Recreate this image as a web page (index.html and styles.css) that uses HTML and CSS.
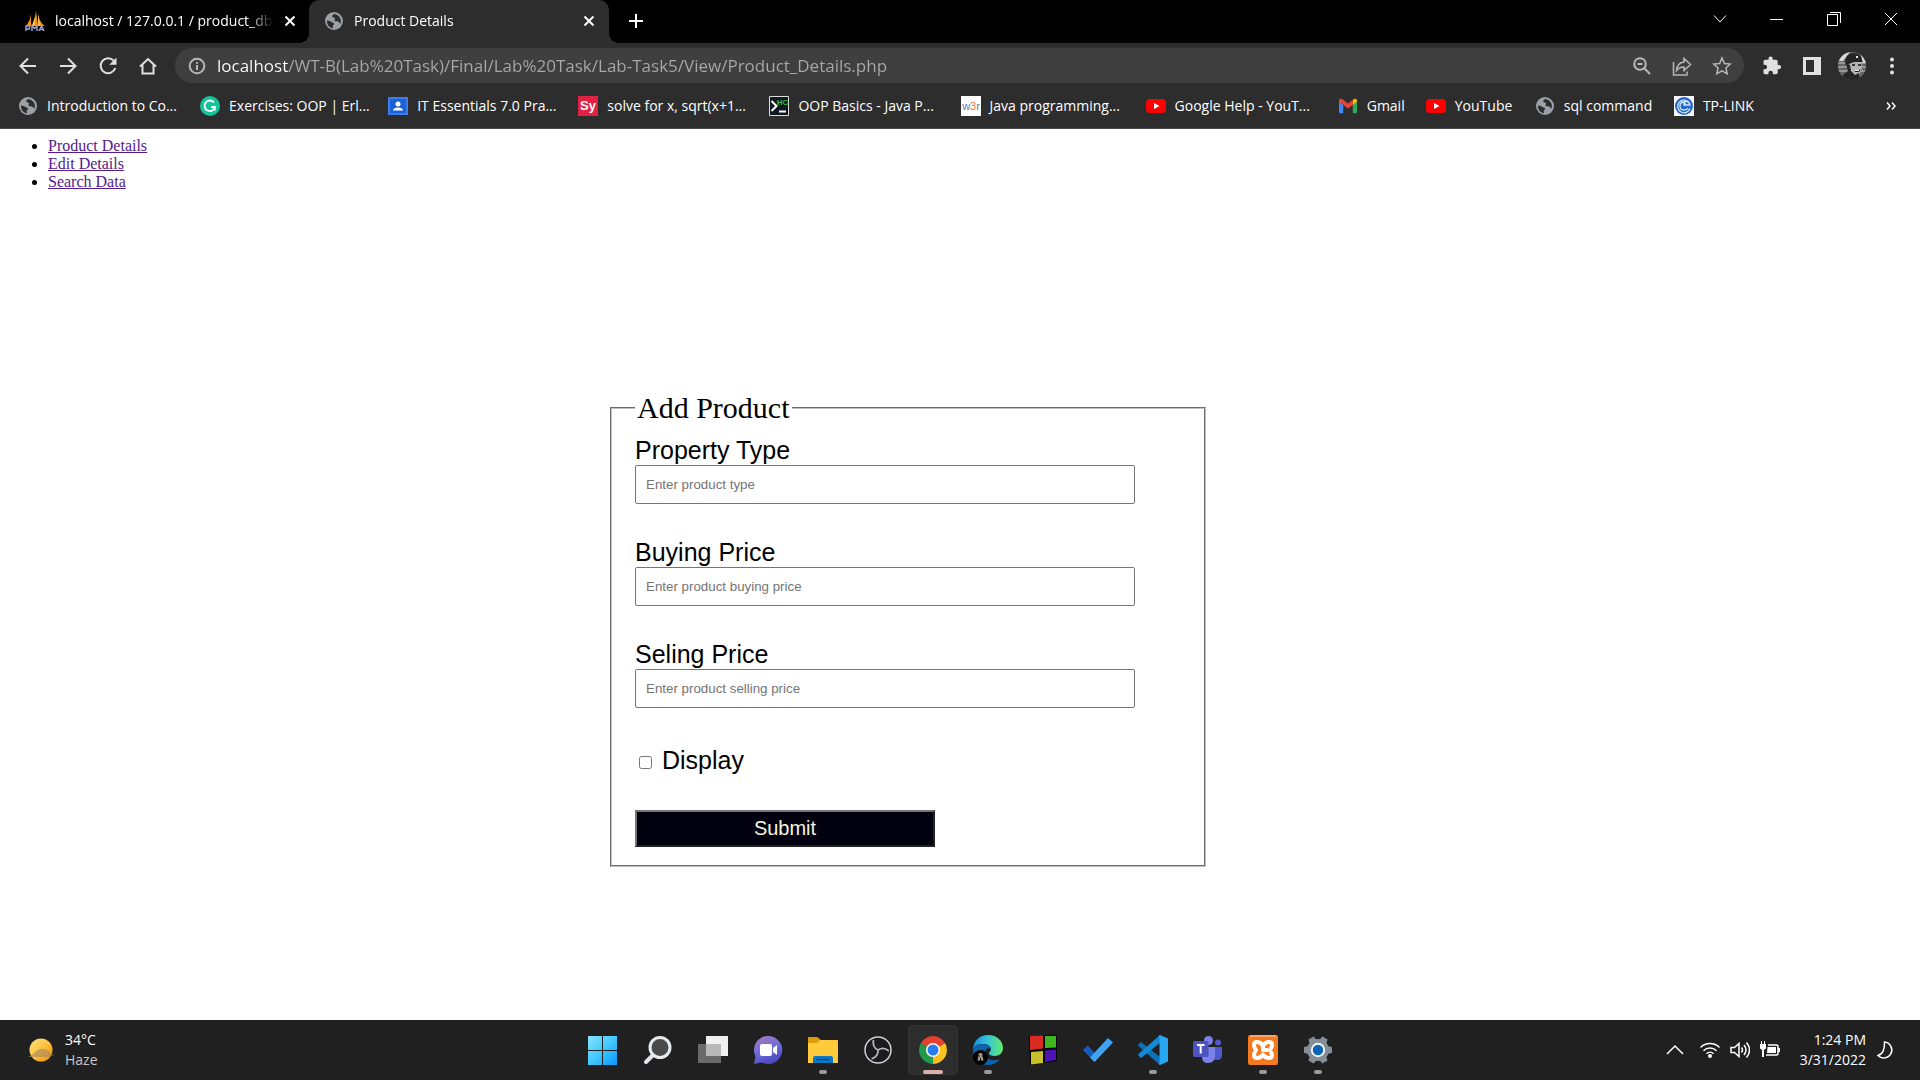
FILE: index.html
```html
<!DOCTYPE html>
<html lang="en">
<head>
<meta charset="utf-8">
<title>Product Details</title>
<link rel="stylesheet" href="styles.css">
</head>
<body>
<svg class="defs" aria-hidden="true">
  <defs>
    <symbol id="globe" viewBox="0 0 20 20"><circle cx="10" cy="10" r="9" fill="#9aa0a6"/><path d="M3 9.500c2 .2 3.500.8 4.500 1.600 1 .7 2.300.5 2.500 1.600.2 1-1.300 1.500-1.300 2.600 0 .8.300 1.300.3 2C5.600 17 2.800 13.800 3 9.500zM10 3c-1.500 1-2 1.800-1.700 2.700.5 1 2.200.6 2.600 1.600.4 1.100-.8 1.600-.2 2.500.8 1 2.500.2 3.500.8.9.6 1.300 1.700 2.300 2 1.300-3.800-.6-8.800-6.500-9.600z" fill="#2d2d2d"/></symbol>
    <symbol id="close" viewBox="0 0 12 12"><path d="M1.500 1.500l9 9m0-9l-9 9" stroke="#fff" stroke-width="2"/></symbol>
    <symbol id="youtube" viewBox="0 0 20 20"><rect x="0" y="3" width="20" height="14" rx="4" fill="#f00"/><path d="M8 7l5.500 3L8 13z" fill="#fff"/></symbol>
  </defs>
</svg>

<header class="browser">
  <div class="tabstrip">
    <div class="tab">
      <svg class="icon20" viewBox="0 0 20 20"><path d="M6 3Q5.500 9 1 15h5zM11 0Q11 8 6.500 15H13zM13 3q1 7 6.500 12H13z" fill="#f29111"/><path d="M11 0q-1 7-4 15h2.500zM13 3v12h2z" fill="#ffc46b"/><path d="M1 20v-5h3.500v3H1M7 20v-5l2.500 2.500L12 15v5M14 20l2.500-5 2.500 5M15 18.500h4" fill="none" stroke="#9a9dc8" stroke-width="1.500"/></svg>
      <span class="tab-title">localhost / 127.0.0.1 / product_db</span>
      <button class="plain" aria-label="Close tab"><svg class="icon12"><use href="#close"/></svg></button>
    </div>
    <div class="tab active">
      <svg class="icon20"><use href="#globe"/></svg>
      <span class="tab-title">Product Details</span>
      <button class="plain" aria-label="Close tab"><svg class="icon12"><use href="#close"/></svg></button>
    </div>
    <button class="plain newtab" aria-label="New tab"><svg class="icon16" viewBox="0 0 16 16"><path d="M8 1v14M1 8h14" stroke="#fff" stroke-width="2"/></svg></button>
    <div class="window-controls">
      <button class="plain" aria-label="Search tabs"><svg class="icon14" viewBox="0 0 14 14"><path d="M1 3.500l6 6.500 6-6.500"/></svg></button>
      <button class="plain" aria-label="Minimize"><svg class="icon14" viewBox="0 0 14 14"><path d="M0 7.500h13"/></svg></button>
      <button class="plain" aria-label="Restore"><svg class="icon14" viewBox="0 0 14 14"><path d="M.5 2.500h10v11H.5zM3 .5h10.500V11"/></svg></button>
      <button class="plain" aria-label="Close"><svg class="icon14" viewBox="0 0 14 14"><path d="M1 1l12 12M13 1L1 13"/></svg></button>
    </div>
  </div>

  <div class="toolbar">
    <div class="nav">
      <button class="plain" aria-label="Back"><svg class="icon20" viewBox="0 0 20 20"><path d="M18 10H3m7-7.500L2.500 10l7.500 7.500"/></svg></button>
      <button class="plain" aria-label="Forward"><svg class="icon20" viewBox="0 0 20 20"><path d="M2 10h15m-7-7.500l7.500 7.500-7.500 7.500"/></svg></button>
      <button class="plain" aria-label="Reload"><svg class="icon20" viewBox="0 0 20 20"><path d="M15.700 4.600A7.500 7.500 0 1 0 17.300 12"/><path d="M18.500 1.500v7.200h-7.200z" fill="#e0e0e0" stroke="none"/></svg></button>
      <button class="plain" aria-label="Home"><svg class="icon20" viewBox="0 0 20 20"><path d="M2 10.500L10 3l8 7.500M4.500 9v8.500h11V9"/></svg></button>
    </div>
    <div class="omnibox">
      <svg class="icon18" viewBox="0 0 18 18"><circle cx="9" cy="9" r="7.300"/><path d="M9 8v5M9 5v1.800"/></svg>
      <input class="address" type="text" aria-label="Address" value="localhost/WT-B(Lab%20Task)/Final/Lab%20Task/Lab-Task5/View/Product_Details.php">
      <button class="plain" aria-label="Zoom"><svg class="icon20" viewBox="0 0 20 20"><circle cx="8" cy="8" r="5.800"/><path d="M12.500 12.500l5.500 5.500M5.500 8h5"/></svg></button>
      <button class="plain" aria-label="Share"><svg class="icon20 thin" viewBox="0 0 20 20"><path d="M1.500 6v13H15v-3.500M12 2.500V6C7 6.500 5 9.500 4.500 14.500 6.500 12 8.500 11 12 11v3.500l6.500-6z"/></svg></button>
      <button class="plain" aria-label="Bookmark"><svg class="icon20 thin" viewBox="0 0 20 20"><path d="M10 2l2.400 5.500 6 .5-4.500 4 1.300 5.800L10 14.800l-5.200 3L6.100 12 1.600 8l6-.5z"/></svg></button>
    </div>
    <div class="extensions">
      <button class="plain" aria-label="Extensions"><svg class="icon20" viewBox="0 0 20 20"><path d="M17 9h-1.300V5.500c0-.9-.7-1.700-1.700-1.700h-3.300V2.500a2 2 0 0 0-4.200 0v1.300H3.200c-.9 0-1.700.8-1.700 1.700v3.200h1.300a2.200 2.200 0 0 1 0 4.500H1.500v3.300c0 .9.800 1.700 1.700 1.700h3.200v-1.300a2.200 2.200 0 0 1 4.500 0v1.300H14c1 0 1.700-.8 1.700-1.700v-3.300H17A2.100 2.100 0 0 0 17 9z" fill="#e0e0e0" stroke="none"/></svg></button>
      <button class="plain" aria-label="Side panel"><svg class="icon20" viewBox="0 0 20 20"><path d="M1 1h18v18H1zM4 4v12h8V4z" fill="#e0e0e0" fill-rule="evenodd" stroke="none"/></svg></button>
      <button class="plain" aria-label="Profile"><svg class="icon28" viewBox="0 0 28 28"><clipPath id="face"><circle cx="14" cy="14" r="14"/></clipPath><g clip-path="url(#face)" stroke="none"><path d="M0 0h28v28H0z" fill="#666"/><path d="M0 11h28M0 15h28M0 19h28" stroke="#a5a5a5" stroke-width="1.500"/><path d="M0 0h12L5 9H0zM22 0h6v11h-4z" fill="#d8d8d8"/><path d="M12 9l11 0 1 7-3 7-5 1-5-5z" fill="#b5b5b5"/><path d="M7 11Q7 2 15 1q9 0 9 7l1 2-9 0-8 3zM8 12l4 1 1 6 4 4 4-2v3l4 4H3l2-5 5-4z" fill="#252525"/><path d="M14 13h3M20 13h3M17 19q3 1 5-1" fill="none" stroke="#111" stroke-width="1.500"/><path d="M17 18h4v1h-4zM18 4h2v2h-2z" fill="#eee"/></g></svg></button>
      <button class="plain" aria-label="Menu"><svg class="icon20" viewBox="0 0 20 20"><g fill="#e0e0e0" stroke="none"><circle cx="10" cy="3.500" r="2"/><circle cx="10" cy="10" r="2"/><circle cx="10" cy="16.500" r="2"/></g></svg></button>
    </div>
  </div>

  <nav class="bookmarks" aria-label="Bookmarks">
    <a href="#"><svg class="icon20"><use href="#globe"/></svg>Introduction to Co...</a>
    <a href="#"><svg class="icon20" viewBox="0 0 20 20"><circle cx="10" cy="10" r="10" fill="#15c39a"/><path d="M14 6.500A5.300 5.300 0 1 0 15 11h-4M14.800 11v3.500" fill="none" stroke="#fff" stroke-width="1.800"/></svg>Exercises: OOP | Erl...</a>
    <a href="#"><svg class="icon20" viewBox="0 0 20 20"><path d="M0 1h20v18H0z" fill="#3b7ded"/><path d="M2 3h16v14H2z" fill="#1a62d6"/><circle cx="10" cy="8" r="2.500" fill="#fff"/><path d="M5 14.500c0-4 10-4 10 0z" fill="#fff"/></svg>IT Essentials 7.0 Pra...</a>
    <a href="#"><svg class="icon20" viewBox="0 0 20 20"><path d="M0 0h20v20H0z" fill="#e12244"/><text x="10" y="14" class="logo-text" fill="#fff" font-size="13">Sy</text></svg>solve for x, sqrt(x+1...</a>
    <a href="#"><svg class="icon20" viewBox="0 0 20 20"><path d="M.5.500h19v19H.5z" fill="#101820" stroke="#ddd"/><path d="M2.500 5l5 5-5 5M10 15.500h7" fill="none" stroke="#fff" stroke-width="2"/><text x="13.500" y="8.500" class="logo-text" fill="#2ebd3c" font-size="8">HC</text></svg>OOP Basics - Java P...</a>
    <a href="#"><svg class="icon20" viewBox="0 0 20 20"><path d="M0 0h20v20H0z" fill="#fff"/><text x="10" y="14" class="logo-text light" fill="#4f7cc0" font-size="11">w<tspan fill="#f07840">3</tspan>r</text></svg>Java programming...</a>
    <a href="#"><svg class="icon20"><use href="#youtube"/></svg>Google Help - YouT...</a>
    <a href="#"><svg class="icon20" viewBox="0 0 20 20"><path d="M1 5v11q0 1.200 1.200 1.200h3V9z" fill="#4285f4"/><path d="M19 5v11q0 1.200-1.200 1.200h-3V9z" fill="#34a853"/><path d="M1 5.500v-.8c0-2 2-2.400 3.200-1.600L10 7.500l4.800-3.600V9L10 12.600z" fill="#ea4335"/><path d="M14.800 9V4l1-.8C17.200 2.200 19 3 19 4.700v1.100z" fill="#fbbc04"/></svg>Gmail</a>
    <a href="#"><svg class="icon20"><use href="#youtube"/></svg>YouTube</a>
    <a href="#"><svg class="icon20"><use href="#globe"/></svg>sql command</a>
    <a href="#"><svg class="icon20" viewBox="0 0 20 20"><path d="M0 0h20v20H0z" fill="#f4f6fa"/><circle cx="10" cy="10" r="9" fill="#2467c4"/><path d="M14.500 6A6.300 6.300 0 1 0 16 12.500M10 10V6q-4 0-4 4t4 4q3 0 4-2M11 9h5q-1-4-5-4z" fill="none" stroke="#cfe6ff" stroke-width="1.300"/></svg>TP-LINK</a>
    <button class="plain more" aria-label="More bookmarks"><svg class="icon12" viewBox="0 0 12 12"><path d="M2 2.500L5 6 2 9.500M7 2.500L10 6 7 9.500" fill="none" stroke="#fff" stroke-width="1.500"/></svg></button>
  </nav>
</header>

<main class="page">
  <ul class="menu">
    <li><a href="#">Product Details</a></li>
    <li><a href="#">Edit Details</a></li>
    <li><a href="#">Search Data</a></li>
  </ul>
  <form class="product-form">
    <fieldset>
      <legend>Add Product</legend>
      <div class="field">
        <label for="type">Property Type</label>
        <input id="type" type="text" placeholder="Enter product type">
      </div>
      <div class="field">
        <label for="buying">Buying Price</label>
        <input id="buying" type="text" placeholder="Enter product buying price">
      </div>
      <div class="field">
        <label for="selling">Seling Price</label>
        <input id="selling" type="text" placeholder="Enter product selling price">
      </div>
      <div class="check">
        <input id="display" type="checkbox">
        <label for="display">Display</label>
      </div>
      <button class="submit" type="button">Submit</button>
    </fieldset>
  </form>
</main>

<footer class="taskbar">
  <div class="weather">
    <svg class="icon28" viewBox="0 0 28 28"><defs><linearGradient id="sun" x1="0" y1="0" x2="1" y2="1"><stop offset="0" stop-color="#ffe880"/><stop offset=".5" stop-color="#fdc040"/><stop offset="1" stop-color="#f58a00"/></linearGradient></defs><circle cx="14" cy="14" r="11.500" fill="url(#sun)"/><path d="M1 21l5-3 3-3 4-2 5 0 5 3 1 2 4 1-5 1-1 1z" fill="#a08a66" opacity=".6"/></svg>
    <div class="weather-text"><span>34°C</span><span class="dim">Haze</span></div>
  </div>

  <div class="apps">
    <button class="app" aria-label="Start"><svg viewBox="0 0 30 30"><defs><linearGradient id="win" gradientUnits="userSpaceOnUse" x1="0" y1="0" x2="30" y2="30"><stop offset="0" stop-color="#8be4ff"/><stop offset=".5" stop-color="#42c8fc"/><stop offset="1" stop-color="#0795ff"/></linearGradient></defs><path d="M0 1h14v14H0zM15 1h14v14H15zM0 16h14v14H0zM15 16h14v14H15z" fill="url(#win)"/></svg></button>
    <button class="app" aria-label="Search"><svg viewBox="0 0 30 30"><path d="M10 20l-7 7" stroke="#e2e5e8" stroke-width="4" stroke-linecap="round"/><circle cx="17" cy="12.500" r="10" fill="#4a4a4a" stroke="#e8ebee" stroke-width="3"/></svg></button>
    <button class="app" aria-label="Task view"><svg viewBox="0 0 30 30"><path d="M8 1h22v20H8z" fill="#f0f0f0"/><path d="M0 9h23v19H0z" fill="#6a6a6a"/><path d="M8 9h15v12H8z" fill="#b8b8b8"/></svg></button>
    <button class="app" aria-label="Chat"><svg viewBox="0 0 30 30"><defs><linearGradient id="chat" x1="0" y1="0" x2=".4" y2="1"><stop offset="0" stop-color="#a77cba"/><stop offset=".6" stop-color="#6c6bdc"/><stop offset="1" stop-color="#4e4bc0"/></linearGradient></defs><path d="M15 1a14 14 0 1 1-6 26.500L1 29l1.500-7.500A14 14 0 0 1 15 1z" fill="url(#chat)"/><rect x="7" y="9" width="12" height="12" rx="2" fill="#fff"/><path d="M20 13l4-3v10l-4-3z" fill="#fff"/></svg></button>
    <button class="app open" aria-label="File Explorer"><svg viewBox="0 0 30 30"><path d="M0 3q0-1 1-1h8q1 0 2 1.500L13 5H29v6H0z" fill="#dc9c09"/><path d="M0 8h9l3-3h17q1 0 1 1v22H0z" fill="#ffcb3d"/><path d="M5 28v-5q0-2 2-2h16q2 0 2 2v5z" fill="#0b78c6"/><path d="M8.500 24.500h13" stroke="#054b83" stroke-width="1.500"/></svg></button>
    <button class="app" aria-label="OBS Studio"><svg viewBox="0 0 30 30"><circle cx="15" cy="15" r="13" fill="#1b1a1f" stroke="#d0d0d4" stroke-width="1.500"/><g fill="none" stroke="#b5b5b9" stroke-width="1.800"><path id="blade" d="M15 15q-6-3-4.500-10"/><use href="#blade" transform="rotate(120 15 15)"/><use href="#blade" transform="rotate(240 15 15)"/></g></svg></button>
    <button class="app open current" aria-label="Chrome"><svg viewBox="0 0 30 30"><path d="M15 15L2.900 8A14 14 0 0 1 27.100 8z" fill="#e8402f"/><path d="M15 15V29A14 14 0 0 1 2.900 8z" fill="#219b4b"/><path d="M15 15h0L27.100 8A14 14 0 0 1 15 29z" fill="#fcc31e"/><path d="M15 8H27L15 15zM9 18.500L3 8l12 7zM21 18.500L15 29V15z" fill="#e8402f"/><path d="M9 18.500L2.900 8 15 15z" fill="#219b4b"/><path d="M21 18.500L15 29V15z" fill="#fcc31e"/><circle cx="15" cy="15" r="7" fill="#fff"/><circle cx="15" cy="15" r="5.500" fill="#267cf0"/></svg></button>
    <button class="app open" aria-label="Edge"><svg viewBox="0 0 30 30"><defs><linearGradient id="edge"><stop offset="0" stop-color="#168de0"/><stop offset=".5" stop-color="#36c5d7"/><stop offset="1" stop-color="#65ea67"/></linearGradient></defs><path d="M0 14C1 5 7 0 15 0c9 0 15 6 15 13 0 5-4 8-8 8-4 0-6-1-6-3 0-1 2-2 2-4 0-3-4-5-8-5-5 0-8 2-10 5z" fill="url(#edge)"/><path d="M0 14c2-4 6-5 9-5 5 0 9 2 9 6-1-3-6-2-6 3 0 6 7 9 15 6-3 4-7 6-12 6C6 30 0 23 0 14z" fill="#0e63ac"/><circle cx="7.500" cy="22.500" r="7.500" fill="#000"/><path d="M7.500 18q2.500 0 2 3l1 4.500h-6l1-4.500q-.5-3 2-3z" fill="#aaa08f"/><path d="M6 21h1m1.500 0h1M7.500 23v3" stroke="#000"/></svg></button>
    <button class="app" aria-label="Photos viewer"><svg viewBox="0 0 30 30"><path d="M1 1l28-1v26L2 30z" fill="#050505"/><path d="M2 1l13-.500v13L2 15z" fill="#d82c20"/><path d="M17 1h11v11.500l-11 .5z" fill="#3fb720"/><path d="M3 17l12-1v12L3 29.500z" fill="#cabf2c"/><path d="M17 15.500l11-1V25l-11 2z" fill="#4e13b5"/></svg></button>
    <button class="app" aria-label="To Do"><svg viewBox="0 0 30 30"><path d="M0 15l4.500-4.500L16 22l-4.500 5z" fill="#195abd"/><path d="M7 22.500L25 3l5 4.500L11.500 27z" fill="#41a3ef"/></svg></button>
    <button class="app open" aria-label="Visual Studio Code"><svg viewBox="0 0 30 30"><path d="M0 10l3-3 19 15v8L1 11.500z" fill="#0b72b9"/><path d="M0 20l3 3L22 8V0L1 18.500z" fill="#1488d2"/><path d="M22 0l8 3.500v23L22 30l-1.500-1 1-1V2l-1-1z" fill="#27a6f4"/></svg></button>
    <button class="app" aria-label="Teams"><svg viewBox="0 0 30 30"><circle cx="15.500" cy="5.500" r="4.500" fill="#7b83eb"/><circle cx="25" cy="7.500" r="3" fill="#5059c9"/><path d="M19 12h10v8q0 5-5 5l-5-1z" fill="#5059c9"/><path d="M9 12h13v9q0 7-7 7-6 0-6-6z" fill="#7b83eb"/><rect y="6" width="15.500" height="16" rx="1.500" fill="#4b53bc"/><path d="M4 10h7.500M7.700 10v8.500" stroke="#fff" stroke-width="2"/></svg></button>
    <button class="app open" aria-label="XAMPP"><svg viewBox="0 0 30 30"><rect width="30" height="30" rx="2" fill="#f47a20"/><path d="M2 1h26" stroke="#fcb27b" stroke-width="1.500"/><path d="M15 11q-2-4-6-4-3 0-3 3 0 2 2 5-2 3-2 5 0 3 3 3 4 0 6-3.500 2 3.500 6 3.500 3 0 3-3 0-2-2-5 2-3 2-5 0-3-3-3-4 0-6 4zM15 11v4h5" fill="none" stroke="#fff" stroke-width="4" stroke-linejoin="round"/></svg></button>
    <button class="app open" aria-label="Settings"><svg viewBox="0 0 30 30"><g fill="#858e96"><circle cx="15" cy="15" r="11"/><path id="tooth" d="M11 6l1-5h6l1 5z" transform="rotate(30 15 15)"/><use href="#tooth" transform="rotate(60 15 15)"/><use href="#tooth" transform="rotate(120 15 15)"/><use href="#tooth" transform="rotate(180 15 15)"/><use href="#tooth" transform="rotate(240 15 15)"/><use href="#tooth" transform="rotate(300 15 15)"/></g><circle cx="15" cy="15" r="6.200" fill="#0a64b7" stroke="#f2f2f2" stroke-width="2"/></svg></button>
  </div>

  <div class="tray">
    <svg class="icon20" viewBox="0 0 20 20"><path d="M2 14l8-8 8 8"/></svg>
    <div class="status">
      <svg class="icon20" viewBox="0 0 20 20"><path d="M.5 7.500a13.500 13.500 0 0 1 19 0M3.500 10.700a9.200 9.200 0 0 1 13 0M6.500 13.700a5 5 0 0 1 7 0"/><circle cx="10" cy="16" r="2" fill="#fff" stroke="none"/></svg>
      <svg class="icon20" viewBox="0 0 20 20"><path d="M1 7.500h3.500L9 3.500v13l-4.500-4H1zM11.500 7.500q2 2.500 0 5M14 5q4 5 0 10M16.500 2.500q6 7.500 0 15"/></svg>
      <svg class="icon20" viewBox="0 0 20 20"><path d="M8 5h8.500q1.500 0 1.500 1.500v7q0 1.500-1.500 1.500H6" /><path d="M7.500 7H16v6H7zM18 8h2v4h-2zM0 4h6v4.500L4 10v7H2v-7L0 8.500zM1 1h1v3H1zM4 1h1v3H4z" fill="#fff" stroke="none"/></svg>
    </div>
    <div class="clock"><span>1:24 PM</span><span>3/31/2022</span></div>
    <svg class="icon20" viewBox="0 0 20 20"><path d="M8.500 2a8 8 0 1 1-6.500 13.500Q9 13.500 8.500 2z"/></svg>
  </div>
</footer>
</body>
</html>
```
FILE: styles.css
```css
* {
  box-sizing: border-box;
}

body {
  margin: 0;
  min-height: 100vh;
  display: flex;
  flex-direction: column;
  background: #fff;
  font: 16px "Liberation Serif", serif;
  color: #000;
}

svg {
  display: block;
  flex: none;
}

.defs {
  position: absolute;
  width: 0;
  height: 0;
}

.icon12 { width: 12px; height: 12px; }
.icon14 { width: 14px; height: 14px; }
.icon16 { width: 16px; height: 16px; }
.icon18 { width: 18px; height: 18px; }
.icon20 { width: 20px; height: 20px; }
.icon28 { width: 28px; height: 28px; }

.plain {
  border: 0;
  padding: 0;
  background: none;
  color: inherit;
}

/* Browser window */

.browser {
  background: #2d2d2d;
  border-bottom: 1px solid #4a4a4a;
  color: #fff;
  font: 14px "Open Sans", sans-serif;
}

.tabstrip {
  display: flex;
  height: 43px;
  background: #000;
}

.tab {
  display: flex;
  align-items: center;
  gap: 10px;
  width: 309px;
  padding: 0 13px 2px 25px;
}

.tab.active {
  position: relative;
  width: 300px;
  padding-left: 15px;
  padding-right: 14px;
  background: #2d2d2d;
  border-radius: 10px 10px 0 0;
}

.tab.active::before,
.tab.active::after {
  content: "";
  position: absolute;
  bottom: 0;
  width: 10px;
  height: 10px;
}

.tab.active::before {
  right: 100%;
  background: radial-gradient(circle at 0 0, #000 10px, #2d2d2d 10px);
}

.tab.active::after {
  left: 100%;
  background: radial-gradient(circle at 100% 0, #000 10px, #2d2d2d 10px);
}

.tab-title {
  flex: 1;
  overflow: hidden;
  white-space: nowrap;
  mask-image: linear-gradient(to right, #000 88%, transparent);
}

.newtab {
  padding: 0 19px 2px;
}

.window-controls {
  display: flex;
  gap: 43px;
  margin-left: auto;
  padding: 0 22px 6px 0;
}

.window-controls path {
  fill: none;
  stroke: #fff;
}

.toolbar {
  display: flex;
  align-items: center;
  padding: 5px 18px;
}

.toolbar svg {
  fill: none;
  stroke: #e0e0e0;
  stroke-width: 2;
}

.nav {
  display: flex;
  gap: 20px;
}

.omnibox {
  flex: 1;
  display: flex;
  align-items: center;
  gap: 20px;
  height: 35px;
  margin-left: 17px;
  padding: 0 12px 0 13px;
  border-radius: 18px;
  background: #3f3f3f;
}

.toolbar .omnibox svg {
  stroke: #b8b8b8;
}

.toolbar .omnibox .thin {
  stroke-width: 1.500;
}

.address {
  flex: 1;
  min-width: 0;
  margin-left: -9px;
  padding: 0;
  border: 0;
  font: 17px "Open Sans", sans-serif;
  color: transparent;
  background: linear-gradient(to right, #fff 72px, #a9a9a9 72px);
  background-clip: text;
}

.extensions {
  display: flex;
  align-items: center;
  gap: 20px;
  margin-left: 18px;
}

.extensions .icon28 {
  margin: 0 -4px;
}

.bookmarks {
  display: grid;
  grid-template-columns: 182fr 188fr 190fr 191fr 191fr 185fr 192fr 88fr 109fr 139fr 211fr auto;
  align-items: center;
  height: 40px;
  padding: 0 23px 5px 18px;
}

.bookmarks a {
  display: flex;
  align-items: center;
  gap: 9px;
  color: #fff;
  text-decoration: none;
  white-space: nowrap;
}

.logo-text {
  font-family: "Liberation Sans", sans-serif;
  font-weight: bold;
  text-anchor: middle;
}

.logo-text.light {
  font-weight: normal;
}

/* Page content */

.page {
  flex: 1;
  padding: 8px 0;
}

.menu {
  margin: 0;
  padding-left: 48px;
  line-height: 18px;
}

.menu a {
  color: #551a8b;
}

.product-form {
  display: grid;
  grid-template-columns: 610fr 596px 714fr;
  margin-top: 200px;
}

.product-form fieldset {
  grid-column: 2;
  margin: 0;
  padding: 11px 23px 18px;
  border: 2px groove #c0c0c0;
}

legend {
  padding: 0 2px;
  font-size: 30px;
  line-height: 34px;
}

.field {
  display: flex;
  flex-direction: column;
  margin-bottom: 34px;
}

.field label,
.check label {
  font: 25px/29px "Liberation Sans", sans-serif;
}

.field input {
  width: 500px;
  height: 39px;
  padding: 0 10px;
  border: 1px solid #767676;
  border-radius: 2px;
  font-family: "Liberation Sans", sans-serif;
}

.check {
  display: flex;
  align-items: center;
  gap: 10px;
  margin: 38px 0 35px;
}

.check input {
  margin: 3px 0 0 4px;
}

.submit {
  display: block;
  width: 300px;
  height: 37px;
  border: 2px outset #767676;
  background: #02010f;
  color: beige;
  font: 20px "Liberation Sans", sans-serif;
}

/* Taskbar */

.taskbar {
  display: grid;
  grid-template-columns: 1fr auto 1fr;
  align-items: center;
  height: 60px;
  background: #202020;
  color: #fff;
  font: 14px/20px "Open Sans", sans-serif;
}

.weather,
.tray,
.status,
.apps {
  display: flex;
  align-items: center;
}

.weather {
  gap: 10px;
  padding-left: 27px;
}

.weather-text,
.clock {
  display: flex;
  flex-direction: column;
}

.dim {
  color: #c8c8c8;
}

.apps {
  gap: 5px;
}

.app {
  position: relative;
  width: 50px;
  height: 50px;
  padding: 10px;
  border: 0;
  border-radius: 5px;
  background: none;
}

.app svg {
  width: 30px;
  height: 30px;
}

.app.current {
  background: #2d2d2d;
  box-shadow: inset 0 0 0 1px #353535;
}

.app.open::after {
  content: "";
  position: absolute;
  left: 21px;
  bottom: 1px;
  width: 8px;
  height: 4px;
  border-radius: 2px;
  background: #9a9a9a;
}

.app.current::after {
  left: 15px;
  width: 20px;
  background: #dcb0aa;
}

.tray {
  justify-content: flex-end;
  padding-right: 24px;
}

.tray svg {
  fill: none;
  stroke: #fff;
  stroke-width: 1.500;
}

.status {
  gap: 10px;
  margin-left: 15px;
}

.clock {
  width: 86px;
  margin-right: 10px;
  text-align: right;
}
```
